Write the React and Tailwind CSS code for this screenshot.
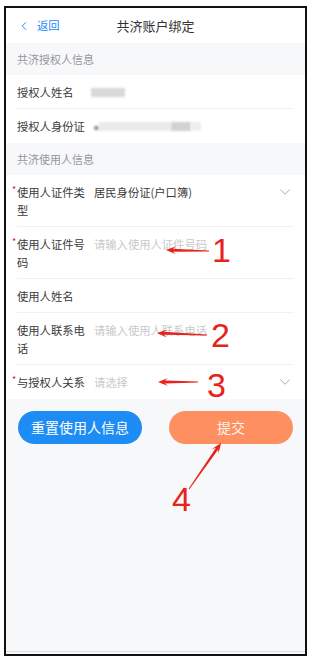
import React from 'react';
import { ChevronDown, ChevronLeft } from 'lucide-react';

const FONT = { fontFamily: '"Noto Sans CJK SC", "Noto Sans", sans-serif' };

// tapered red arrow like a screenshot-tool annotation
const arrowPoints = (x1, y1, x2, y2) => {
  const dx = x2 - x1;
  const dy = y2 - y1;
  const len = Math.hypot(dx, dy);
  const ux = dx / len;
  const uy = dy / len;
  const nx = -uy;
  const ny = ux;
  const L = 10, W = 4, w = 1.5, t = 0.5;
  const neck = [x2 - ux * (L - 3), y2 - uy * (L - 3)];
  const barb = [x2 - ux * L, y2 - uy * L];
  const pts = [
    [x1 + nx * t, y1 + ny * t],
    [neck[0] + nx * w, neck[1] + ny * w],
    [barb[0] + nx * W, barb[1] + ny * W],
    [x2, y2],
    [barb[0] - nx * W, barb[1] - ny * W],
    [neck[0] - nx * w, neck[1] - ny * w],
    [x1 - nx * t, y1 - ny * t],
  ];
  return pts.map(p => p.map(v => v.toFixed(1)).join(',')).join(' ');
};

const SectionTitle = ({ children }) => (
  <div className="h-[32px] flex items-center px-[11px] text-[11px] text-[#969799]">{children}</div>
);

const Row = ({ label, required, children, select, last }) => (
  <div className="bg-white px-[11px]">
    <div className={`flex items-start pt-[8px] text-[11.3px] leading-[18px] ${last ? 'pb-[8px]' : 'pb-[7px] border-b border-[#f0f1f3]'}`}>
      <div className="relative w-[70px] mr-[7px] shrink-0 text-[#3a3a3c]">
        {required && <span className="absolute left-[-5px] top-[-2px] text-[9px] text-[#ee0a24]">*</span>}
        {label}
      </div>
      <div className="flex-1 flex items-center min-h-[18px]">{children}</div>
      {select && <ChevronDown size={18} strokeWidth={1.1} className="text-[#969799] shrink-0" />}
    </div>
  </div>
);

const Placeholder = ({ children }) => <span className="text-[#c8c9cc]">{children}</span>;

const marks = [
  { a: [209, 251, 166, 250], n: '1', left: 212, top: 233 },
  { a: [207, 335, 157, 333], n: '2', left: 211, top: 318 },
  { a: [198, 382, 158, 382], n: '3', left: 207, top: 368 },
  { a: [189, 489, 221, 443], n: '4', left: 172, top: 482 },
];

export default function App() {
  return (
    <div className="relative w-[312px] h-[661px] bg-white overflow-hidden" style={FONT}>
      <div className="ml-[4px] mt-[6px] w-[303px] h-[650px] border-2 border-[#111] bg-[#f7f8fa] flex flex-col">
        <div className="relative h-[35px] bg-white flex items-center px-[11px]">
          <div className="flex items-center text-[#1989fa] text-[11.3px]">
            <ChevronLeft size={14} strokeWidth={1.6} />
            <span className="ml-[6px]">返回</span>
          </div>
          <div className="absolute inset-0 flex items-center justify-center text-[13px] text-[#323233] pointer-events-none">
            共济账户绑定
          </div>
        </div>

        <SectionTitle>共济授权人信息</SectionTitle>
        <Row label="授权人姓名">
          <div className="ml-[-3px] w-[34px] h-[9px] bg-[#d8d8d8] blur-[1px]" />
        </Row>
        <Row label="授权人身份证" last>
          <div className="w-[5px] h-[4px] mt-[4px] bg-[#9a9a9a] blur-[1px]" />
          <div className="w-[72px] h-[9px] bg-[#ebebeb] blur-[1px]" />
          <div className="w-[20px] h-[9px] bg-[#d2d2d2] blur-[1px]" />
          <div className="w-[10px] h-[9px] bg-[#eeeeee] blur-[1px]" />
        </Row>

        <SectionTitle>共济使用人信息</SectionTitle>
        <Row label="使用人证件类型" required select>
          <span className="text-[#3a3a3c]">居民身份证(户口簿)</span>
        </Row>
        <Row label="使用人证件号码" required>
          <Placeholder>请输入使用人证件号码</Placeholder>
        </Row>
        <Row label="使用人姓名" />
        <Row label="使用人联系电话">
          <Placeholder>请输入使用人联系电话</Placeholder>
        </Row>
        <Row label="与授权人关系" required select last>
          <Placeholder>请选择</Placeholder>
        </Row>

        <div className="flex justify-between px-[12px] mt-[12px]">
          <button className="w-[124px] h-[33px] rounded-full bg-[#1e8cf5] text-white text-[14px]">重置使用人信息</button>
          <button className="w-[124px] h-[33px] rounded-full bg-[#fd8f61] text-[#fff3ea] text-[14px]">提交</button>
        </div>

        <div className="flex-1" />
        <div className="h-[3px] border-t border-[#dcdcdc]" />
      </div>

      <svg className="absolute inset-0 pointer-events-none" width="312" height="661" viewBox="0 0 312 661">
        {marks.map(m => (
          <polygon key={m.n} points={arrowPoints(...m.a)} fill="#e8231b" />
        ))}
      </svg>
      {marks.map(m => (
        <span
          key={m.n}
          className="absolute text-[34px] leading-none text-[#e8231b]"
          style={{ left: m.left, top: m.top, fontFamily: '"Liberation Sans", Arial, sans-serif' }}
        >
          {m.n}
        </span>
      ))}
    </div>
  );
}
